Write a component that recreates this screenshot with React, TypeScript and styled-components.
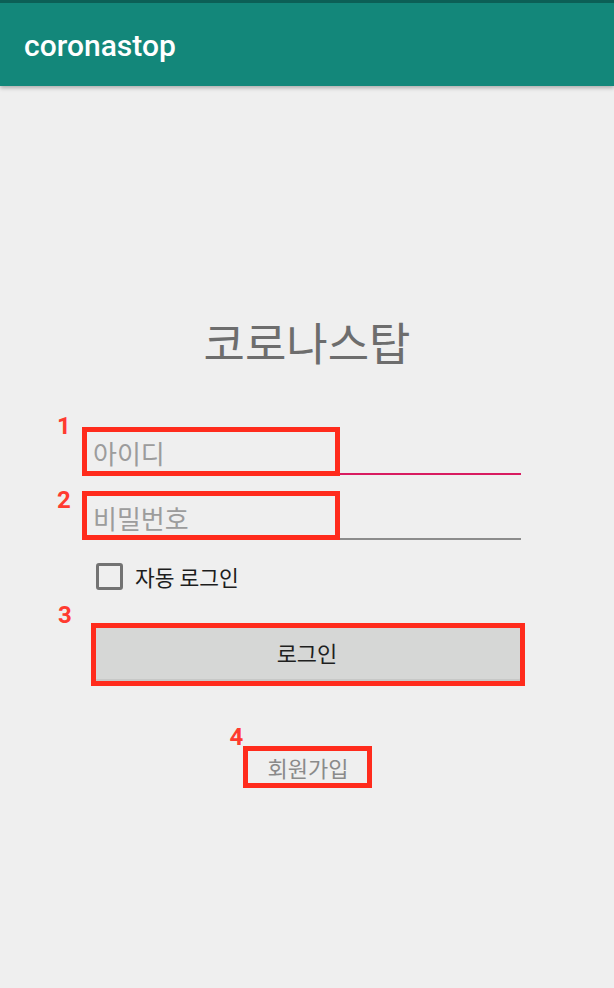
import React from "react";
import styled, { createGlobalStyle } from "styled-components";

const Global = createGlobalStyle`
  html, body { margin: 0; padding: 0; background: #efefef; }
  body { font-family: Roboto, "Noto Sans CJK KR", sans-serif; }
  * { box-sizing: border-box; }
`;

const Screen = styled.div`
  width: 614px;
  height: 988px;
  background: #efefef;
  overflow: hidden;
  display: flex;
  flex-direction: column;
`;

const AppBar = styled.header`
  height: 86px;
  background: #13877a;
  border-top: 3px solid #0c5f56;
  box-shadow: 0 2px 4px rgba(0, 0, 0, 0.28);
  display: flex;
  align-items: center;
  padding: 2px 0 0 24px;
  position: relative;
  z-index: 1;
`;

const AppTitle = styled.h1`
  margin: 0;
  font-family: Roboto, sans-serif;
  font-weight: 500;
  font-size: 30px;
  color: #ffffff;
`;

const Form = styled.main`
  width: 428px;
  margin: 0 auto;
  padding-top: 225px;
  display: flex;
  flex-direction: column;
  font-family: "Noto Sans CJK KR", Roboto, sans-serif;
`;

const Title = styled.h2`
  margin: 0;
  text-align: center;
  font-size: 45px;
  line-height: 62px;
  font-weight: 400;
  color: #6d6d6d;
  font-family: "Noto Sans CJK KR", sans-serif;
`;

const Annotated = styled.div<{ $mt?: number }>`
  position: relative;
  margin-top: ${(p) => p.$mt ?? 0}px;
`;

const Field = styled.input<{ $focused?: boolean }>`
  display: block;
  width: 100%;
  height: 48px;
  padding: 4px 0 0 0;
  border: none;
  border-bottom: ${(p) => (p.$focused ? "2px solid #d81b60" : "2px solid #8c8c8c")};
  background: transparent;
  font-family: "Noto Sans CJK KR", sans-serif;
  font-size: 26px;
  color: #222;
  outline: none;
  &::placeholder { color: #9c9c9c; }
`;

const CheckRow = styled.label`
  height: 41px;
  margin-top: 16px;
  display: flex;
  align-items: center;
  padding-left: 3px;
  gap: 12px;
  font-size: 21.5px;
  color: #1d1d1d;
  font-family: "Noto Sans CJK KR", sans-serif;
`;

const CheckBox = styled.span`
  width: 27px;
  height: 27px;
  border: 3px solid #737373;
  border-radius: 3px;
  flex-shrink: 0;
`;

const LoginButton = styled.button`
  display: block;
  width: 100%;
  height: 55px;
  border: none;
  border-radius: 2px;
  background: #d6d7d6;
  box-shadow: inset 0 -3px 0 #c7c8c7;
  font-family: "Noto Sans CJK KR", sans-serif;
  font-size: 22px;
  color: #1f1f1f;
  padding: 0 0 5px 0;
`;

const SignUpRow = styled.div`
  display: flex;
  justify-content: center;
  margin-top: 64px;
`;

const SignUp = styled.a`
  width: 129px;
  height: 42px;
  display: flex;
  align-items: center;
  justify-content: center;
  font-size: 22px;
  color: #8a8a8a;
  font-family: "Noto Sans CJK KR", sans-serif;
  padding-left: 2px;
`;

const RedBox = styled.div<{ $l: number; $t: number; $w: number; $h: number }>`
  position: absolute;
  left: ${(p) => p.$l}px;
  top: ${(p) => p.$t}px;
  width: ${(p) => p.$w}px;
  height: ${(p) => p.$h}px;
  border: 5px solid #ff2b1c;
  pointer-events: none;
`;

const Mark = styled.span<{ $l: number; $t: number }>`
  position: absolute;
  left: ${(p) => p.$l}px;
  top: ${(p) => p.$t}px;
  font-family: Roboto, "Liberation Sans", sans-serif;
  font-weight: 700;
  font-size: 24px;
  line-height: 24px;
  color: #ff3b30;
`;

export default function App() {
  return (
    <>
      <Global />
      <Screen>
        <AppBar>
          <AppTitle>coronastop</AppTitle>
        </AppBar>
        <Form>
          <Title>코로나스탑</Title>
          <Annotated $mt={54}>
            <Field $focused placeholder="아이디" />
            <RedBox $l={-11} $t={0} $w={258} $h={49} />
            <Mark $l={-36} $t={-13}>1</Mark>
          </Annotated>
          <Annotated $mt={17}>
            <Field type="password" placeholder="비밀번호" />
            <RedBox $l={-11} $t={-1} $w={258} $h={49} />
            <Mark $l={-36} $t={-4}>2</Mark>
          </Annotated>
          <CheckRow>
            <CheckBox />
            자동 로그인
          </CheckRow>
          <Annotated $mt={30}>
            <LoginButton>로그인</LoginButton>
            <RedBox $l={-2} $t={-4} $w={434} $h={63} />
            <Mark $l={-35} $t={-24}>3</Mark>
          </Annotated>
          <SignUpRow>
            <Annotated>
              <SignUp>회원가입</SignUp>
              <RedBox $l={0} $t={0} $w={129} $h={42} />
              <Mark $l={-13} $t={-21}>4</Mark>
            </Annotated>
          </SignUpRow>
        </Form>
      </Screen>
    </>
  );
}
